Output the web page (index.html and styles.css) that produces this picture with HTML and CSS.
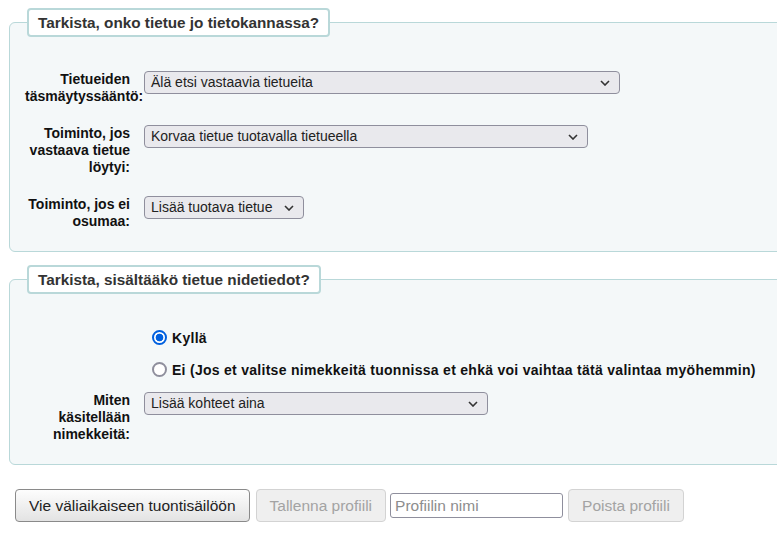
FILE: index.html
```html
<!DOCTYPE html>
<html lang="fi">
<head>
<meta charset="utf-8">
<title>Tuonti</title>
<link rel="stylesheet" href="styles.css">
</head>
<body>
<div class="page">
  <fieldset class="rows">
    <legend>Tarkista, onko tietue jo tietokannassa?</legend>
    <div class="content first">
      <div class="row">
        <label class="lbl">Tietueiden täsmäytyssääntö:</label>
        <div class="select w1">Älä etsi vastaavia tietueita</div>
      </div>
      <div class="row">
        <label class="lbl">Toiminto, jos vastaava tietue löytyi:</label>
        <div class="select w2">Korvaa tietue tuotavalla tietueella</div>
      </div>
      <div class="row">
        <label class="lbl">Toiminto, jos ei osumaa:</label>
        <div class="select w3">Lisää tuotava tietue</div>
      </div>
    </div>
  </fieldset>

  <fieldset class="rows second">
    <legend>Tarkista, sisältääkö tietue nidetiedot?</legend>
    <div class="content second-content">
      <div class="radio-row">
        <span class="radio checked"></span>
        <span class="radio-text">Kyllä</span>
      </div>
      <div class="radio-row">
        <span class="radio"></span>
        <span class="radio-text">Ei (Jos et valitse nimekkeitä tuonnissa et ehkä voi vaihtaa tätä valintaa myöhemmin)</span>
      </div>
      <div class="row">
        <label class="lbl">Miten käsitellään nimekkeitä:</label>
        <div class="select w4">Lisää kohteet aina</div>
      </div>
    </div>
  </fieldset>

  <div class="actions">
    <button class="btn primary">Vie väliaikaiseen tuontisäilöön</button>
    <button class="btn disabled save">Tallenna profiili</button>
    <input class="name" type="text" placeholder="Profiilin nimi">
    <button class="btn disabled">Poista profiili</button>
  </div>
</div>
</body>
</html>
```

FILE: styles.css
```css
html, body {
  margin: 0;
  padding: 0;
  overflow: hidden;
  background: #fff;
}
body {
  font-family: "Liberation Sans", Arial, sans-serif;
  color: #000;
}
.page {
  padding: 8px 0 0 9px;
}
.rows {
  margin: 0 -30px 0 0;
  padding: 0;
  border: 1px solid #b9d8d9;
  border-radius: 6px;
  background: #f4f8f9;
  min-width: 0;
}
.rows.second {
  margin-top: 13px;
}
.rows legend {
  margin-left: 17px;
  padding: 4px 9px 4px 9px;
  background: #fff;
  border: 2px solid #b9d8d9;
  border-radius: 4px;
  font-size: 15.3px;
  font-weight: bold;
  line-height: 17px;
  color: #333;
}
.content {
  padding: 34px 0 21px 0;
  display: flex;
  flex-direction: column;
}
.content.first .row + .row {
  margin-top: 20px;
}
.second-content {
  padding-top: 35px;
  padding-bottom: 21px;
}
.row {
  display: flex;
  align-items: flex-start;
}
.lbl {
  flex: none;
  width: 105px;
  margin-left: 15px;
  margin-right: 14px;
  text-align: right;
  font-size: 14px;
  font-weight: bold;
  line-height: 17px;
  color: #111;
}
.select {
  box-sizing: border-box;
  height: 23px;
  border: 1px solid #8f8f9d;
  border-radius: 4px;
  background-color: #e9e9ed;
  background-image: url("data:image/svg+xml,%3Csvg xmlns='http://www.w3.org/2000/svg' width='10' height='6' viewBox='0 0 10 6'%3E%3Cpath d='M1 1l4 4 4-4' fill='none' stroke='%23333' stroke-width='1.6'/%3E%3C/svg%3E");
  background-repeat: no-repeat;
  background-position: right 9px center;
  font-size: 14px;
  line-height: 21px;
  padding-left: 6px;
  color: #222;
}
.w1 { width: 476px; }
.w2 { width: 444px; }
.w3 { width: 160px; }
.w4 { width: 344px; }

.radio-row {
  display: flex;
  align-items: center;
  height: 17px;
  margin-left: 142px;
  margin-bottom: 15px;
}
.radio-row + .radio-row {
  margin-bottom: 14px;
}
.radio {
  box-sizing: border-box;
  width: 15px;
  height: 15px;
  border-radius: 50%;
  border: 2px solid #8f8f9d;
  background: #fff;
  margin-right: 5px;
}
.radio.checked {
  border-color: #0060df;
  background: radial-gradient(circle, #0060df 0 3.5px, #fff 4.2px);
}
.radio-text {
  font-size: 14px;
  font-weight: bold;
  letter-spacing: 0.28px;
  color: #111;
}

.actions {
  display: flex;
  align-items: center;
  margin: 24px 0 0 6px;
}
.btn {
  box-sizing: border-box;
  height: 33px;
  font-family: "Liberation Sans", Arial, sans-serif;
  font-size: 15.5px;
  padding: 0 13px;
  border-radius: 4px;
  margin-right: 6px;
}
.btn.save {
  margin-right: 4px;
}
.btn.primary {
  border: 1px solid #8a8a8a;
  background: linear-gradient(#fdfdfd, #e3e3e3);
  color: #222;
}
.btn.disabled {
  border: 1px solid #d3d3d3;
  background: #efefef;
  color: #a3a3a3;
}
.name {
  box-sizing: border-box;
  width: 173px;
  height: 25px;
  border: 1px solid #8f8f9d;
  border-radius: 3px;
  padding: 0 4px;
  font-family: "Liberation Sans", Arial, sans-serif;
  font-size: 15.5px;
  margin-right: 5px;
  background: #fff;
}
.name::placeholder {
  color: #8d8d8d;
}
```
